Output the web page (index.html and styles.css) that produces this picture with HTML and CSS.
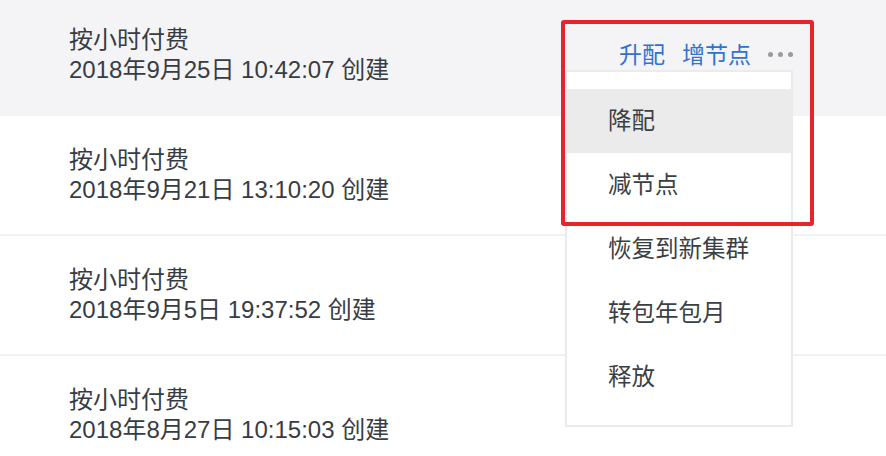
FILE: index.html
```html
<!DOCTYPE html>
<html lang="zh-CN">
<head>
<meta charset="utf-8">
<link rel="stylesheet" href="styles.css">
</head>
<body>
<div class="page">
  <div class="list">
    <div class="row row-active">
      <div class="info">
        <div class="line">按小时付费</div>
        <div class="line">2018年9月25日 10:42:07 创建</div>
      </div>
      <div class="actions">
        <a class="link">升配</a>
        <a class="link">增节点</a>
        <span class="more"><i></i><i></i><i></i></span>
      </div>
    </div>
    <div class="row">
      <div class="info">
        <div class="line">按小时付费</div>
        <div class="line">2018年9月21日 13:10:20 创建</div>
      </div>
    </div>
    <div class="row">
      <div class="info">
        <div class="line">按小时付费</div>
        <div class="line">2018年9月5日 19:37:52 创建</div>
      </div>
    </div>
    <div class="row">
      <div class="info">
        <div class="line">按小时付费</div>
        <div class="line">2018年8月27日 10:15:03 创建</div>
      </div>
    </div>
  </div>
  <ul class="menu">
    <li class="menu-item hover">降配</li>
    <li class="menu-item">减节点</li>
    <li class="menu-item">恢复到新集群</li>
    <li class="menu-item">转包年包月</li>
    <li class="menu-item">释放</li>
  </ul>
  <div class="highlight-box"></div>
</div>
</body>
</html>
```
FILE: styles.css
```css
* { box-sizing: border-box; }
html, body { margin: 0; padding: 0; background: #fff; }
body {
  font-family: "Liberation Sans", "Noto Sans CJK SC", sans-serif;
  color: #383c42;
  overflow: hidden;
  height: 456px;
}
.page { position: relative; width: 886px; height: 456px; overflow: hidden; }
.list { margin-top: -5px; }
.row {
  height: 120px;
  display: flex;
  align-items: center;
  padding-left: 69px;
  padding-right: 93px;
  border-bottom: 2px solid #f1f1f2;
}
.row-active { background: #f4f4f6; border-bottom-color: #f4f4f6; height: 121px; }
.info { flex: 1; font-size: 24px; line-height: 30px; }
.line { white-space: nowrap; }
.actions { display: flex; align-items: center; font-size: 23px; padding-bottom: 3px; }
.link { color: #2f72d2; margin-left: 17px; }
.more { display: flex; gap: 5px; margin-left: 17px; padding-top: 3px; }
.more i { width: 5px; height: 5px; border-radius: 50%; background: #9b9b9e; display: block; }
.menu {
  position: absolute;
  left: 565px;
  top: 70px;
  width: 228px;
  height: 357px;
  margin: 0;
  padding: 17px 0;
  list-style: none;
  background: #fff;
  border: 2px solid #ebebeb;
}
.menu-item {
  height: 64px;
  display: flex;
  align-items: center;
  padding-left: 41px;
  padding-bottom: 4px;
  font-size: 23.5px;
  color: #3b3f44;
}
.menu-item.hover { background: #ebebeb; }
.highlight-box {
  position: absolute;
  left: 561px;
  top: 20px;
  width: 253px;
  height: 206px;
  border: 4px solid #e5252a;
  border-radius: 3px;
}
```
